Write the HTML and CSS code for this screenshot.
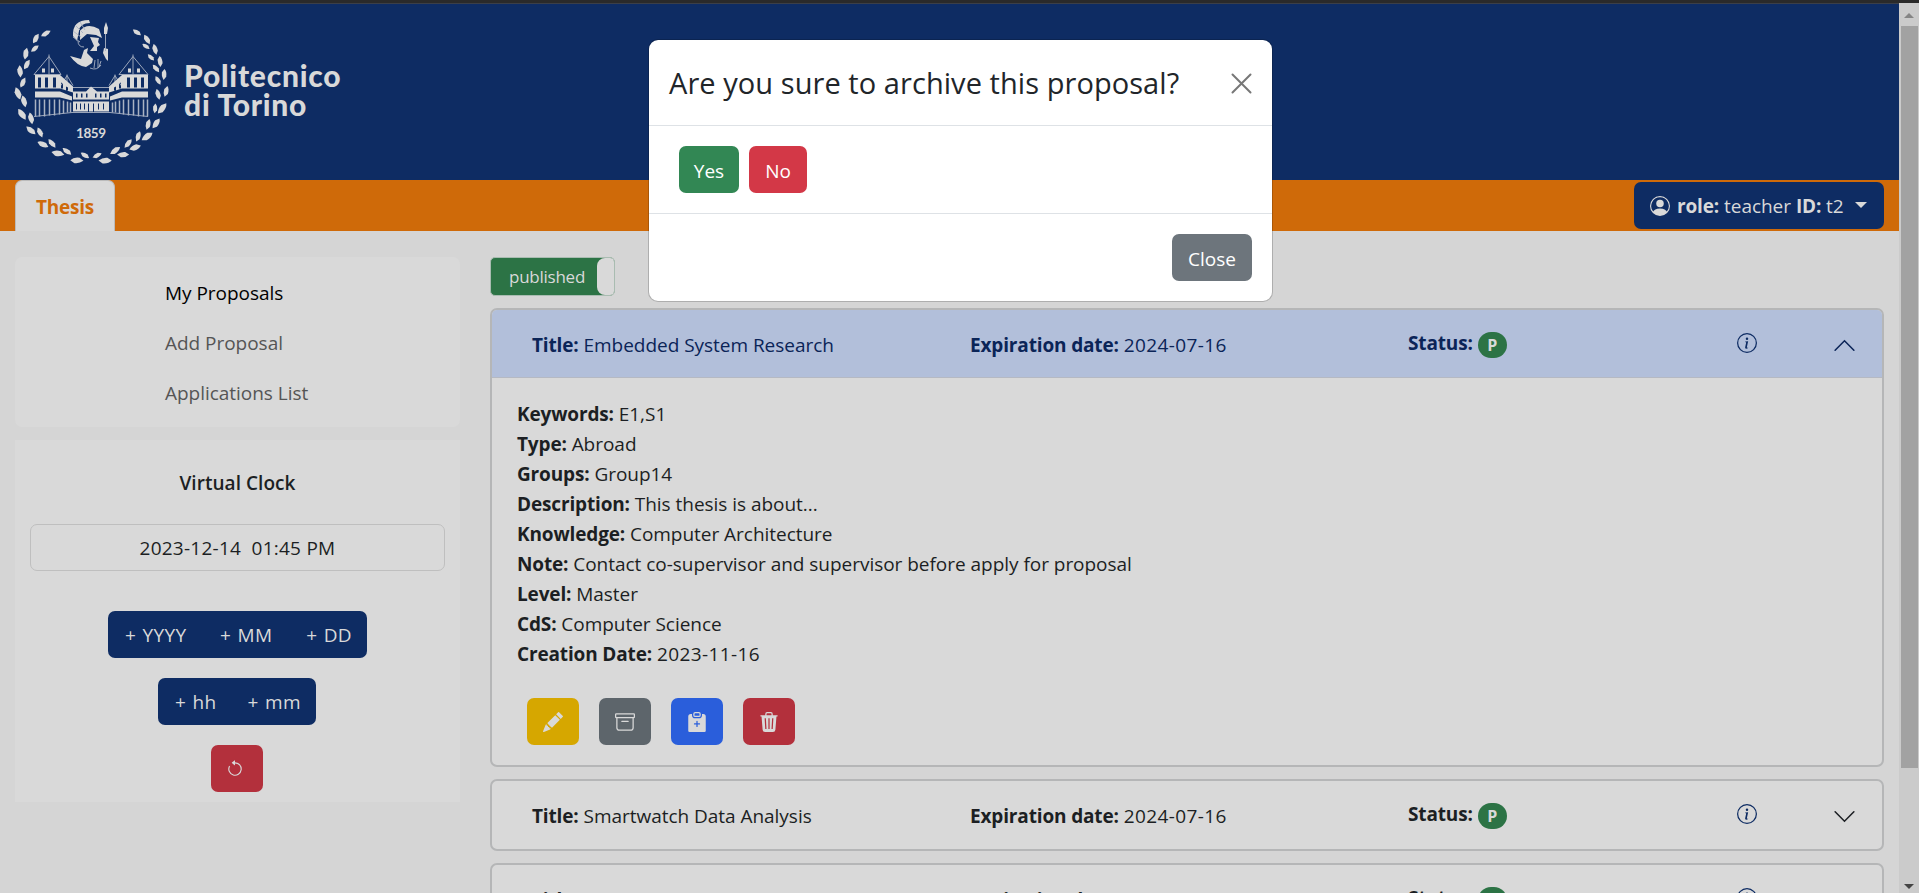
FILE: index.html
```html
<!DOCTYPE html>
<html lang="en">
<head>
<meta charset="utf-8">
<title>Thesis Management</title>
<link rel="stylesheet" href="styles.css">
</head>
<body>
<div class="page">
  <div class="main">
    <header class="header">
      <svg class="crest" width="160" height="150" viewBox="0 0 160 150">
        <defs><path id="leaf" d="M-5.6 0Q-3-2.800 2-2.400L5.400 0Q2 2.700-2 2.300Z"/></defs>
        <g class="fill" id="wreath" transform="translate(0 -3.500)"></g>
        <g transform="translate(-11 -2)">
          <g class="fill">
            <path d="M73 19Q72 3 89 3L90 6Q80 6 79 14L77 24Z"/>
            <path d="M80 14Q87 5 99 12L102 21L96 18L87 17L80 23Z"/>
            <path d="M90 20L99 21L98 25L100 28L97 30L97 34L90 34L94 29Z"/>
            <path d="M70 39L81 42L84 33L88 31L87 36L93 42L92 46L86 50Q77 49 70 39Z"/>
            <path d="M106 5L108 11L107 17L104 17L104 11Z"/>
            <path d="M104 31L108 32L108 44L106 42L103 36Z"/>
          </g>
          <path class="line" d="M75 8L83 16M80 5L85 13M73 14L81 20M73 20L80 25M78 24Q78 30 84 30M105.500 17V34M95 43L94 51M98 42L98 51M101 44L99 50M90 51Q97 54 101 48"/>
        </g>
        <g transform="translate(-11 -1.500)">
          <path class="line" d="M34 57L49 39L61 57M49 37V57M34 57H61M119 57L133 39L148 57M133 37V57M119 57H148M61 68L67 58L73 68M67 57V68M109 68L115 58L121 68M115 57V68M73 70H109"/>
          <path class="line" d="M34 99L72 95H110L148 99"/>
          <g class="fill">
            <path d="M42 51h3v4h-3zM51 51h3v4h-3zM128 51h3v4h-3zM137 51h3v4h-3z"/>
            <path fill-rule="evenodd" d="M35 57.500H60L73 69V75L60 71H35ZM38 60V70H41V60ZM45 60V70H48V60ZM53 60V70H56V60ZM61 65V71H63V66ZM66 69V73H68V70Z"/>
            <path fill-rule="evenodd" d="M148 57.500H122L109 69V75L122 71H148ZM144 60V70H141V60ZM137 60V70H134V60ZM130 60V70H127V60ZM121 65V71H119V66ZM116 69V73H114V70Z"/>
            <path fill-rule="evenodd" d="M35 74H60L72 79V83L60 80H35ZM148 74H122L110 79V83L122 80H148ZM73 74H86L91 69L97 74H109V82H73ZM76 76V80H77.500V76ZM81 76V80H82.500V76ZM86 76V80H87.500V76ZM95 76V80H96.500V76ZM100 76V80H101.500V76ZM105 76V80H106.500V76Z"/>
            <path fill-rule="evenodd" d="M73 84H109V94H73ZM76 86V92H77V86ZM80 86V92H81V86ZM84 86V92H85V86ZM88 86V94H89V86ZM93 86V94H94V86ZM98 86V92H99V86ZM103 86V92H104V86Z"/>
          </g>
          <path class="line columns" d="M35.500 82V99M39.500 82V99M44.500 82V99M49.500 82V98M54.500 82V98M59.500 82V97M63.500 83V96M67.500 84V95M70.500 85V95M112.500 85V95M115.500 84V95M119.500 83V96M123.500 82V97M128.500 82V98M133.500 82V98M138.500 82V99M143.500 82V99M147.500 82V99"/>
        </g>
        <text class="year" x="80" y="118.500" textLength="30">1859</text>
      </svg>
      <div class="wordmark"><span>Politecnico</span><span>di Torino</span></div>
    </header>
    <nav class="bar">
      <div class="tab">Thesis</div>
      <div class="role">
        <svg width="20" height="20" viewBox="0 0 16 16"><path d="M11 6a3 3 0 1 1-6 0 3 3 0 0 1 6 0"/><path fill-rule="evenodd" d="M0 8a8 8 0 1 1 16 0A8 8 0 0 1 0 8m8-7a7 7 0 0 0-5.468 11.370C3.242 11.226 4.805 10 8 10s4.757 1.225 5.468 2.370A7 7 0 0 0 8 1"/></svg>
        <span><b>role:</b> teacher <b>ID:</b> t2</span><i class="caret"></i>
      </div>
    </nav>
    <div class="content">
      <aside class="side">
        <div class="menu"><a class="active">My Proposals</a><a>Add Proposal</a><a>Applications List</a></div>
        <div class="clock">
          <h2>Virtual Clock</h2>
          <div class="date">2023-12-14&nbsp; 01:45 PM</div>
          <div class="group g1"><span>+ YYYY</span><span>+ MM</span><span>+ DD</span></div>
          <div class="group g2"><span>+ hh</span><span>+ mm</span></div>
          <div class="btn red reset"><svg width="18" height="18" viewBox="0 0 16 16"><path fill-rule="evenodd" d="M8 3a5 5 0 1 1-4.546 2.914.5.5 0 0 0-.908-.417A6 6 0 1 0 8 2z"/><path d="M8 4.466V.534a.25.25 0 0 0-.410-.192L5.230 2.308a.25.25 0 0 0 0 .384l2.360 1.966A.25.25 0 0 0 8 4.466"/></svg></div>
        </div>
      </aside>
      <main class="list">
        <div class="toggle"><span>published</span><i></i></div>
        <section class="item open">
          <div class="row">
            <div class="title"><b>Title:</b> Embedded System Research</div>
            <div class="exp"><b>Expiration date:</b> <span class="num">2024-07-16</span></div>
            <div class="status"><b>Status:</b><em>P</em></div>
            <svg class="info" width="20" height="20" viewBox="0 0 16 16"><path d="M8 15A7 7 0 1 1 8 1a7 7 0 0 1 0 14m0 1A8 8 0 1 0 8 0a8 8 0 0 0 0 16"/><path d="m8.930 6.588-2.290.287-.082.380.450.083c.294.070.352.176.288.469l-.738 3.468c-.194.897.105 1.319.808 1.319.545 0 1.178-.252 1.465-.598l.088-.416c-.2.176-.492.246-.686.246-.275 0-.375-.193-.304-.533zM9 4.500a1 1 0 1 1-2 0 1 1 0 0 1 2 0"/></svg>
            <svg class="chev" width="25" height="25" viewBox="0 0 16 16"><path d="M2 11 8 5l6 6"/></svg>
          </div>
          <div class="details">
            <p><b>Keywords:</b> E1,S1</p>
            <p><b>Type:</b> Abroad</p>
            <p><b>Groups:</b> Group14</p>
            <p><b>Description:</b> This thesis is about...</p>
            <p><b>Knowledge:</b> Computer Architecture</p>
            <p><b>Note:</b> Contact co-supervisor and supervisor before apply for proposal</p>
            <p><b>Level:</b> Master</p>
            <p><b>CdS:</b> Computer Science</p>
            <p><b>Creation Date:</b> <span class="num">2023-11-16</span></p>
            <div class="actions">
              <div class="btn yellow"><svg width="20" height="20" viewBox="0 0 16 16"><path d="M12.854.146a.5.5 0 0 0-.707 0L10.500 1.793 14.207 5.500l1.647-1.646a.5.5 0 0 0 0-.708zm.646 6.061L9.793 2.500 3.293 9H3.500a.5.5 0 0 1 .5.500v.5h.5a.5.5 0 0 1 .5.500v.5h.5a.5.5 0 0 1 .5.500v.5h.5a.5.5 0 0 1 .5.500v.207zm-7.468 7.468A.5.500 0 0 1 6 13.500V13h-.5a.5.5 0 0 1-.5-.5V12h-.5a.5.5 0 0 1-.5-.5V11h-.5a.5.5 0 0 1-.5-.5V10h-.5a.5.500 0 0 1-.175-.032l-.179.178a.5.5 0 0 0-.110.168l-2 5a.5.5 0 0 0 .650.650l5-2a.5.5 0 0 0 .168-.110z"/></svg></div>
              <div class="btn gray"><svg width="20" height="20" viewBox="0 0 16 16"><path d="M0 2a1 1 0 0 1 1-1h14a1 1 0 0 1 1 1v2a1 1 0 0 1-1 1v7.500a2.500 2.500 0 0 1-2.500 2.500h-9A2.500 2.500 0 0 1 1 12.500V5a1 1 0 0 1-1-1zm2 3v7.500A1.500 1.500 0 0 0 3.500 14h9a1.500 1.500 0 0 0 1.500-1.500V5zm13-3H1v2h14zM5 7.500a.5.5 0 0 1 .5-.5h5a.5.5 0 0 1 0 1h-5a.5.5 0 0 1-.5-.5"/></svg></div>
              <div class="btn blue"><svg width="20" height="20" viewBox="0 0 16 16"><path d="M6.500 0A1.500 1.500 0 0 0 5 1.500v1A1.500 1.500 0 0 0 6.500 4h3A1.500 1.500 0 0 0 11 2.500v-1A1.500 1.500 0 0 0 9.500 0zm3 1a.5.5 0 0 1 .5.500v1a.5.5 0 0 1-.5.500h-3a.5.5 0 0 1-.5-.5v-1a.5.5 0 0 1 .5-.5z"/><path fill-rule="evenodd" d="M4 1.500H3a2 2 0 0 0-2 2V15a1 1 0 0 0 1 1h12a1 1 0 0 0 1-1V3.500a2 2 0 0 0-2-2h-1v1A2.500 2.500 0 0 1 9.500 5h-3A2.500 2.500 0 0 1 4 2.500zm4.500 6V9H10a.5.5 0 0 1 0 1H8.500v1.500a.5.5 0 0 1-1 0V10H6a.5.5 0 0 1 0-1h1.500V7.500a.5.5 0 0 1 1 0"/></svg></div>
              <div class="btn red"><svg width="20" height="20" viewBox="0 0 16 16"><path d="M6.500 0A1.500 1.500 0 0 0 5 1.500v1H1.500a.5.5 0 0 0 0 1h.540l.850 10.660A2 2 0 0 0 4.890 16h6.220a2 2 0 0 0 2-1.840l.850-10.660h.540a.5.5 0 0 0 0-1H11v-1A1.500 1.500 0 0 0 9.500 0zM6 2.500v-1a.5.5 0 0 1 .5-.5h3a.5.5 0 0 1 .5.500v1zM4.500 5h1l.5 8.500H5zM7.500 5h1v8.500h-1zM10.500 5h1L11 13.500h-1z" fill-rule="evenodd"/></svg></div>
            </div>
          </div>
        </section>
        <section class="item">
          <div class="row">
            <div class="title"><b>Title:</b> Smartwatch Data Analysis</div>
            <div class="exp"><b>Expiration date:</b> <span class="num">2024-07-16</span></div>
            <div class="status"><b>Status:</b><em>P</em></div>
            <svg class="info" width="20" height="20" viewBox="0 0 16 16"><path d="M8 15A7 7 0 1 1 8 1a7 7 0 0 1 0 14m0 1A8 8 0 1 0 8 0a8 8 0 0 0 0 16"/><path d="m8.930 6.588-2.290.287-.082.380.450.083c.294.070.352.176.288.469l-.738 3.468c-.194.897.105 1.319.808 1.319.545 0 1.178-.252 1.465-.598l.088-.416c-.2.176-.492.246-.686.246-.275 0-.375-.193-.304-.533zM9 4.500a1 1 0 1 1-2 0 1 1 0 0 1 2 0"/></svg>
            <svg class="chev" width="25" height="25" viewBox="0 0 16 16"><path d="M2 5l6 6 6-6"/></svg>
          </div>
        </section>
        <section class="item">
          <div class="row">
            <div class="title"><b>Title:</b> Renewable Energy</div>
            <div class="exp"><b>Expiration date:</b> <span class="num">2024-07-16</span></div>
            <div class="status"><b>Status:</b><em>P</em></div>
            <svg class="info" width="20" height="20" viewBox="0 0 16 16"><path d="M8 15A7 7 0 1 1 8 1a7 7 0 0 1 0 14m0 1A8 8 0 1 0 8 0a8 8 0 0 0 0 16"/><path d="M9 4.500a1 1 0 1 1-2 0 1 1 0 0 1 2 0"/></svg>
            <svg class="chev" width="25" height="25" viewBox="0 0 16 16"><path d="M2 5l6 6 6-6"/></svg>
          </div>
        </section>
      </main>
    </div>
  </div>
  <div class="scroll"><i class="up"></i><div class="thumb"></div><i class="down"></i></div>
</div>
<div class="modal">
  <div class="mhead"><h1>Are you sure to archive this proposal?</h1><svg width="21" height="21" viewBox="0 0 21 21"><path d="M1.500 1.500l18 18M19.500 1.500l-18 18"/></svg></div>
  <div class="mbody"><button class="yes">Yes</button><button class="no">No</button></div>
  <div class="mfoot"><button class="close">Close</button></div>
</div>
<script src="wreath.js"></script>
</body>
</html>
```
FILE: styles.css
```css
*{box-sizing:border-box}
body{margin:0;height:893px;overflow:hidden;font-family:"Open Sans","Noto Sans",sans-serif;font-size:19px;line-height:30px;color:#1c1f23;background:#d5d5d5;letter-spacing:-.03px}
b{font-weight:700;letter-spacing:-.15px}
p,h1,h2{margin:0}
svg{display:block;flex:none}
.num{letter-spacing:.4px}
.page{display:flex;height:893px;border-top:3px solid #2a2a2a;overflow:hidden}
.main{width:1899px;flex:none}
.header{height:177px;background:#0e2c63;border-top:1px solid #3b3f48;display:flex;padding:15px 0 0 11px}
.crest .fill{fill:#d9d9d9}
.line{fill:none;stroke:#a9b2c3;stroke-width:.9}
.columns{stroke-width:1.500}
.year{font-family:Lato,sans-serif;font-weight:700;font-size:13.500px;fill:#d9d9d9;text-anchor:middle;letter-spacing:0}
.wordmark{padding:42px 0 0 13px;display:flex;flex-direction:column;font-family:Lato,sans-serif;font-weight:900;font-size:30px;line-height:29px;color:#d9d9d9;white-space:nowrap;letter-spacing:.75px}
.bar{height:51px;background:#cf6a09;display:flex;justify-content:space-between;padding:0 15px}
.tab{width:100px;height:51px;background:#d9d9d9;border:1px solid #bbb;border-bottom:0;border-radius:7px 7px 0 0;text-align:center;line-height:53px;color:#cf6a09;font-weight:700;letter-spacing:-.2px}
.role{width:250px;height:47px;margin-top:2px;background:#0e2c63;border-radius:7px;color:#d9d9d9;display:flex;align-items:center;padding-left:16px;white-space:nowrap}
.role svg{fill:#d9d9d9;margin-right:7px}
.caret{border:6px solid transparent;border-top-color:#d9d9d9;border-bottom:0;margin-left:11px;margin-top:-2px}
.content{display:flex;padding:26px 15px 0}
.side{width:445px;margin-right:30px;flex:none}
.menu{height:170px;border-radius:7px;background:#d9d9d9;padding:11px 0 0 150px}
.menu a{display:block;height:50px;line-height:50px;color:#555}
.menu a.active{color:#000}
.clock{margin-top:13px;height:362px;background:#d9d9d9;padding:28px 15px 0;display:flex;flex-direction:column;align-items:center}
h2{font-size:19px;font-weight:600;line-height:30px;letter-spacing:.05px}
.date{margin-top:26px;width:415px;height:47px;border:1px solid #bfbfbf;border-radius:7px;text-align:center;line-height:46px;letter-spacing:.25px}
.group{display:flex;height:47px;border-radius:7px;background:#0e2c63;color:#d9d9d9;line-height:49px;justify-content:space-between;padding:0 15px 0 17px;letter-spacing:.35px;word-spacing:1px}
.g1{width:259px;margin-top:40px}
.g2{width:158px;margin:20px 1px 0 0}
.btn{width:52px;height:47px;border-radius:7px;display:flex;align-items:center;justify-content:center;fill:#d9d9d9}
.reset{margin:20px 2px 0 0}
.reset svg{margin-right:3px}
.red{background:#b3303c}.yellow{background:#d6a700}.gray{background:#5d656b}.blue{background:#2a5edb}
.list{width:1394px}
.toggle{width:125px;height:39px;border:1px solid #a9bcb1;border-radius:5px;background:#2c7345;color:#d9d9d9;font-size:17px;letter-spacing:-.25px;line-height:37px;display:flex;justify-content:space-between;padding-left:18px;margin-bottom:12px}
.toggle i{width:17px;background:#d9d9d9;border-radius:8px 4px 4px 8px}
.item{border:2px solid #b5b6b7;border-radius:7px;background:#d9d9d9;height:72px;margin-bottom:12px;overflow:hidden}
.open{height:459px}
.row{height:68px;display:flex;align-items:center;padding-left:40px;white-space:nowrap}
.open .row{background:#b2bfda;color:#0b2457;border-bottom:1px solid #b5b9c3}
.title,.exp{width:438px;flex:none;padding-top:1px}
.open .title,.open .exp{padding-top:3px}
.status{width:329px;display:flex;align-items:center}
.status b{margin-top:-2px}
em{font-style:normal;font-weight:700;font-size:16px;width:29px;height:26px;line-height:26px;border-radius:13px;background:#2c7345;color:#d9d9d9;text-align:center;margin:1px 0 0 5px}
.open em{margin-top:2px}
.info{fill:#0e2c63;margin-right:75px;margin-top:-2px}
.chev{fill:none;stroke:#1c1f23;stroke-width:1;stroke-linecap:round;margin-top:2px}
.open .chev{stroke:#0b2457;margin-top:3px}
.details{padding:21px 25px}
.details p{height:30px;white-space:nowrap}
.actions{display:flex;gap:20px;padding:29px 0 0 10px}
.scroll{width:20px;flex:none;background:#cbcbcb;display:flex;flex-direction:column;align-items:center}
.thumb{width:17px;height:742px;background:#a2a2a2;margin-top:8px}
.up,.down{border:5px solid transparent}
.up{border-bottom-color:#858585;border-top:0;margin-top:10px}
.down{border-top-color:#444;border-bottom:0;margin-top:116px}
.modal{position:absolute;left:648px;top:39px;width:625px;height:263px;background:#fff;border:1px solid rgba(0,0,0,.18);border-radius:10px;background-clip:padding-box;color:#212529}
.mhead{height:86px;border-bottom:1px solid #dee2e6;display:flex;justify-content:space-between;align-items:center;padding:1px 20px 0}
h1{font-size:29px;font-weight:500;line-height:40px;white-space:nowrap;letter-spacing:.06px}
.mhead svg{fill:none;stroke:#777;stroke-width:2;stroke-linecap:round}
.mbody{height:88px;border-bottom:1px solid #dee2e6;padding:20px 30px;display:flex;gap:10px}
button{border:0;border-radius:7px;height:47px;color:#fff;font:inherit;letter-spacing:inherit;padding:2px 0 0}
.yes{background:#328754;width:60px}.no{background:#d33847;width:58px}
.close{background:#6d757c;width:80px}
.mfoot{padding:20px;display:flex;justify-content:flex-end}
```
FILE: wreath.js
```js
// Leaves of the crest wreath: x, y, rotation in degrees, scale.
const leaves = [
  [35,18,-30,1],[25,23,-60,1],[24,33,-40,.9],[15,38,-80,1.1],[16,49,-60,1],[9,56,85,1.1],[12,67,-65,1],[7,78,70,1.2],[13,86,75,1.1],
  [11,99,55,1.2],[20,103,78,1.1],[20,115,40,1.1],[29,117,65,1],[32,129,25,1.1],[41,128,50,1],[47,138,12,1.2],[56,136,38,1],[66,145,3,1.2],[74,140,32,.9],
  [126,17,35,.9],[136,24,60,1],[135,31,35,.8],[144,34,75,1],[140,42,45,.8],[149,46,85,1],[145,53,50,.9],[153,59,95,1],[147,65,60,.9],[155,76,105,1],[147,79,75,1],
  [151,93,130,1.2],[144,93,95,.9],[145,108,125,1.1],[137,109,105,1],[136,121,145,1.2],[127,121,110,1],[124,132,160,1.1],[117,128,130,1],[112,139,180,1.1],[104,135,145,1.1],[94,145,180,1.2],[86,140,155,.9]
];
document.getElementById("wreath").innerHTML = leaves.map(([x, y, r, s]) =>
  `<use href="#leaf" transform="translate(${x} ${y}) rotate(${r}) scale(${s})"/>`).join("");
```
